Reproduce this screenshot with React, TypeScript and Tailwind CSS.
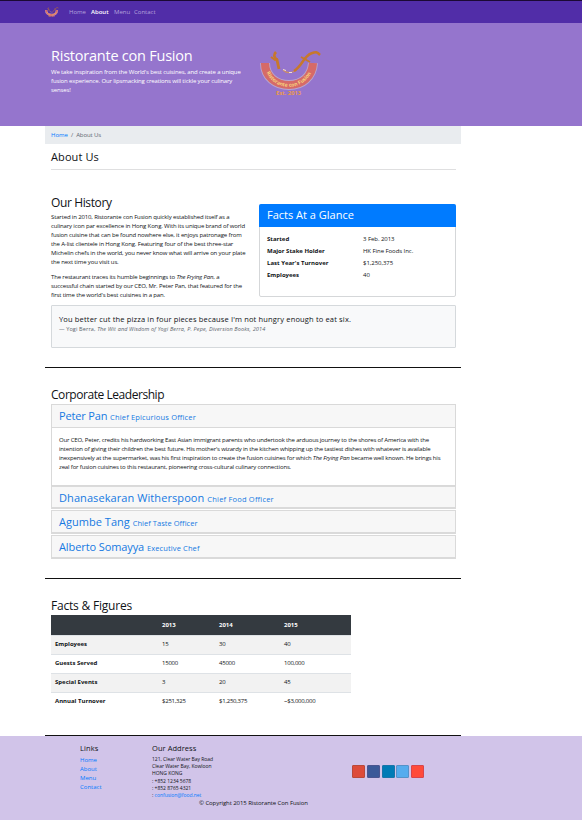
import React from "react";

function Logo({ className, id }: { className: string; id: string }) {
  return (
    <svg viewBox="0 0 62 46" className={className} fill="none">
      <path d="M5 12C5 26 16 34 29 34S52 26 53 12" stroke="#b9a6cf" strokeWidth="10" />
      <path d="M5 12C5 26 16 34 29 34S52 26 53 12" stroke="#d66a68" strokeWidth="8.2" />
      <path id={id} d="M6 20.500C11 31 19 35.8 29 35.8S48 30 53.500 18" />
      <text fontFamily="Open Sans, sans-serif" fontSize="5.1" fontWeight="700" fill="#f6d27c">
        <textPath href={`#${id}`} startOffset="1">Ristorante con Fusion</textPath>
      </text>
      <path d="M16 1c-3 3-2 5 1 8l2 9" stroke="#c7782c" strokeWidth="2.8" />
      <path d="M11 6l4 3 3-1" stroke="#c7782c" strokeWidth="2" />
      <path d="M23 19c4 4 8 3 12 1" stroke="#c88c6e" strokeWidth="1.3" />
      <path d="M23 18.500l3 1M29 21.500l3 0" stroke="#f3dfcf" strokeWidth="1" />
      <path d="M34 20C42 15 44 5 51 2.500S58 2 60 4" stroke="#c7782c" strokeWidth="2.5" />
      <path d="M41 6l9 5" stroke="#c7782c" strokeWidth="1.8" />
      <text x="16" y="44" fontFamily="Open Sans, sans-serif" fontSize="5.8" fontWeight="700" fill="#eb9a48" textLength="25">Est. 2013</text>
    </svg>
  );
}

function Lines({ items }: { items: React.ReactNode[] }) {
  return (
    <>
      {items.map((item, i) => (
        <span key={i} className="block whitespace-nowrap">{item}</span>
      ))}
    </>
  );
}

const leaders = [
  { name: "Dhanasekaran Witherspoon", role: "Chief Food Officer", box: "h-[23px] mb-px", track: "tracking-[0.08px]", small: "tracking-[0.2px]" },
  { name: "Agumbe Tang", role: "Chief Taste Officer", box: "h-[24px] mb-px", track: "tracking-[0.03px]", small: "tracking-[0.03px]" },
  { name: "Alberto Somayya", role: "Executive Chef", box: "h-[24px]", track: "tracking-[-0.1px]", small: "tracking-[0.12px]" },
];

const facts = [
  ["Started", "3 Feb. 2013"],
  ["Major Stake Holder", "HK Fine Foods Inc."],
  ["Last Year's Turnover", "$1,250,375"],
  ["Employees", "40"],
];

const figures = [
  ["Employees", "15", "30", "40"],
  ["Guests Served", "15000", "45000", "100,000"],
  ["Special Events", "3", "20", "45"],
  ["Annual Turnover", "$251,325", "$1,250,375", "~$3,000,000"],
];

const social = [
  "bg-[#dd4b39] border-[#b94939]",
  "bg-[#3b5998] border-[#4a5590]",
  "bg-[#007bb6] border-[#1975a9]",
  "bg-[#55acee] border-[#5592c9]",
  "bg-[#ff4b3a] border-[#d8454b]",
];

export default function App() {
  return (
    <div className="h-[820px] w-[582px] overflow-hidden bg-white font-['Open_Sans','Noto_Sans',sans-serif] text-[6px] leading-[9px] text-[#101316]">
      <nav className="flex h-[23px] items-center border-t border-[#1b0935] bg-[#512da8] pl-[45px] text-[#b5a2dc]">
        <Logo id="nav-arc" className="mt-px h-[11px] w-[14px]" />
        <span className="ml-[10px] w-[22px]">Home</span>
        <span className="w-[23px] font-semibold text-white">About</span>
        <span className="w-[20px]">Menu</span>
        <span>Contact</span>
      </nav>
      <header className="flex h-[103px] bg-[#9575cd] pl-[51px] text-white">
        <div className="w-[209px] pt-[24px]">
          <h1 className="whitespace-nowrap text-[14.500px] leading-[18px] tracking-[-0.23px]">Ristorante con Fusion</h1>
          <p className="mt-[3px] font-medium tracking-[-0.13px]">
            <Lines items={["We take inspiration from the World's best cuisines, and create a unique", "fusion experience. Our lipsmacking creations will tickle your culinary", "senses!"]} />
          </p>
        </div>
        <Logo id="hero-arc" className="mt-[28px] h-[46px] w-[62px]" />
      </header>

      <main className="ml-[45px] h-[610px] w-[416px]">
        <div className="flex h-[18px] items-center gap-[3px] bg-[#e9ecef] pl-[6px] text-[#5f6870]">
          <span className="text-[#007bff]">Home</span><span>/</span><span className="tracking-[-0.1px]">About Us</span>
        </div>
        <div className="pl-[6px] pr-[5px]">
          <h3 className="h-[26px] border-b border-[#dfdfe0] pt-[5px] text-[11px] leading-[16px] tracking-[0.1px]">About Us</h3>
          <div className="flex h-[135px] justify-between pt-[25px]">
            <section className="w-[200px]">
              <h2 className="text-[12px] leading-[16px] tracking-[-0.38px]">Our History</h2>
              <p className="mt-[2px] font-medium tracking-[-0.14px]">
                <Lines items={["Started in 2010, Ristorante con Fusion quickly established itself as a", "culinary icon par excellence in Hong Kong. With its unique brand of world", "fusion cuisine that can be found nowhere else, it enjoys patronage from", "the A-list clientele in Hong Kong. Featuring four of the best three-star", "Michelin chefs in the world, you never know what will arrive on your plate", "the next time you visit us."]} />
              </p>
              <p className="mt-[6px] font-medium tracking-[-0.14px]">
                <Lines items={[<>The restaurant traces its humble beginnings to <em>The Frying Pan</em>, a</>, "successful chain started by our CEO, Mr. Peter Pan, that featured for the", "first time the world's best cuisines in a pan."]} />
              </p>
            </section>
            <section className="mt-[9px] h-[93px] w-[197px] shrink-0 rounded-[2px] border border-[#d5d7d9]">
              <h3 className="-mx-px -mt-px h-[23px] rounded-t-[2px] bg-[#007bff] pl-[8px] text-[11px] leading-[22px] text-white">Facts At a Glance</h3>
              <dl className="grid grid-cols-[96px_1fr] pl-[7px] pt-[6px] leading-[12px]">
                {facts.map(([k, v]) => (
                  <React.Fragment key={k}><dt className="font-bold">{k}</dt><dd className="font-medium tracking-[-0.05px]">{v}</dd></React.Fragment>
                ))}
              </dl>
            </section>
          </div>
          <blockquote className="h-[43px] rounded-[1px] border border-[#d5d9dc] bg-[#f8f9fa] pl-[7px] pt-[8px]">
            <p className="text-[7.500px] leading-[11px] tracking-[0.155px]">You better cut the pizza in four pieces because I'm not hungry enough to eat six.</p>
            <footer className="text-[5.500px] leading-[8px] tracking-[0.14px] text-[#59626a]">— Yogi Berra, <cite>The Wit and Wisdom of Yogi Berra, P. Pepe, Diversion Books, 2014</cite></footer>
          </blockquote>
        </div>
        <div className="mt-[19px] h-px bg-[#111]" />
        <section className="h-[210px] pl-[6px] pr-[5px] pt-[19px]">
          <h2 className="h-[17px] text-[12px] leading-[16px] tracking-[-0.45px]">Corporate Leadership</h2>
          <div className="h-[82px] border border-[#d9d9d9]">
            <h3 className="h-[23px] border-b border-[#d9d9d9] bg-[#f7f7f7] pl-[7px] text-[11px] leading-[21px] tracking-[-0.15px] text-[#1579e2]">Peter Pan <small className="text-[7.500px] tracking-[0.16px]">Chief Epicurious Officer</small></h3>
            <p className="pl-[7px] pt-[8px] font-medium tracking-[-0.16px]">
              <Lines items={["Our CEO, Peter, credits his hardworking East Asian immigrant parents who undertook the arduous journey to the shores of America with the", "intention of giving their children the best future. His mother's wizardy in the kitchen whipping up the tastiest dishes with whatever is available", <>inexpensively at the supermarket, was his first inspiration to create the fusion cuisines for which <em>The Frying Pan</em> became well known. He brings his</>, "zeal for fusion cuisines to this restaurant, pioneering cross-cultural culinary connections."]} />
            </p>
          </div>
          {leaders.map((l) => (
            <h3 key={l.name} className={`${l.box} ${l.track} border border-b-2 border-[#dadada] bg-[#f7f7f7] pl-[7px] text-[11px] leading-[21px] text-[#1579e2]`}>
              {l.name} <small className={`${l.small} text-[7.500px]`}>{l.role}</small>
            </h3>
          ))}
        </section>
        <div className="h-px bg-[#111]" />
        <section className="h-[156px] px-[6px] pt-[19px]">
          <h2 className="h-[17px] text-[12px] leading-[16px] tracking-[-0.2px]">Facts &amp; Figures</h2>
          <table className="w-[300px] table-fixed border-collapse text-left">
            <colgroup><col className="w-[107px]" /><col className="w-[57px]" /><col className="w-[65px]" /><col className="w-[71px]" /></colgroup>
            <thead>
              <tr className="h-[20px] bg-[#343a40] text-white"><th /><th className="pl-[4px] pt-px">2013</th><th className="pl-[4px] pt-px">2014</th><th className="pl-[4px] pt-px">2015</th></tr>
            </thead>
            <tbody>
              {figures.map((row) => (
                <tr key={row[0]} className="h-[19px] border-t border-[#dee2e6] odd:bg-[#f2f2f2]">
                  {row.map((cell, i) => i === 0 ? <th key={i} className="pl-[4px]">{cell}</th> : <td key={i} className="pl-[4px] font-medium tracking-[-0.24px]">{cell}</td>)}
                </tr>
              ))}
            </tbody>
          </table>
        </section>
        <div className="h-px bg-[#111]" />
      </main>

      <footer className="h-[84px] bg-[#d1c4e9] pt-[7px]">
        <div className="flex h-[55px] pl-[80px]">
          <div className="w-[72px]">
            <h5 className="text-[7.500px] leading-[10px] tracking-[0.1px]">Links</h5>
            <p className="mt-[3px] text-[#007bff]"><Lines items={["Home", "About", "Menu", "Contact"]} /></p>
          </div>
          <div className="w-[200px]">
            <h5 className="text-[7.500px] leading-[10px] tracking-[0.05px]">Our Address</h5>
            <address className="mt-[3px] text-[5px] font-medium not-italic leading-[7.200px] tracking-[-0.02px]">
              <Lines items={["121, Clear Water Bay Road", "Clear Water Bay, Kowloon", "HONG KONG", ": +852 1234 5678", ": +852 8765 4321", <>: <span className="text-[#007bff]">confusion@food.net</span></>]} />
            </address>
          </div>
          <div className="flex gap-[1.750px] pt-[22px]">
            {social.map((s) => <span key={s} className={`${s} h-[13px] w-[13px] rounded-[1px] border`} />)}
          </div>
        </div>
        <p className="pl-[199px] pt-px font-medium tracking-[-0.08px]">© Copyright 2015 Ristorante Con Fusion</p>
      </footer>
    </div>
  );
}
